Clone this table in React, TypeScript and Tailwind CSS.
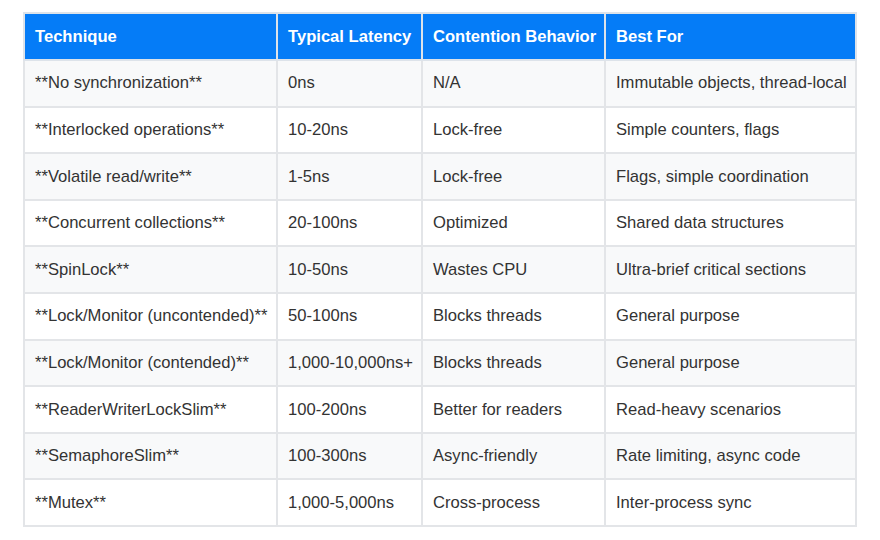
import React from "react";

const ROWS = [
  ["**No synchronization**", "0ns", "N/A", "Immutable objects, thread-local"],
  ["**Interlocked operations**", "10-20ns", "Lock-free", "Simple counters, flags"],
  ["**Volatile read/write**", "1-5ns", "Lock-free", "Flags, simple coordination"],
  ["**Concurrent collections**", "20-100ns", "Optimized", "Shared data structures"],
  ["**SpinLock**", "10-50ns", "Wastes CPU", "Ultra-brief critical sections"],
  ["**Lock/Monitor (uncontended)**", "50-100ns", "Blocks threads", "General purpose"],
  ["**Lock/Monitor (contended)**", "1,000-10,000ns+", "Blocks threads", "General purpose"],
  ["**ReaderWriterLockSlim**", "100-200ns", "Better for readers", "Read-heavy scenarios"],
  ["**SemaphoreSlim**", "100-300ns", "Async-friendly", "Rate limiting, async code"],
  ["**Mutex**", "1,000-5,000ns", "Cross-process", "Inter-process sync"],
];

const HEADERS = ["Technique", "Typical Latency", "Contention Behavior", "Best For"];
const WIDTHS = ["w-[253px]", "w-[145px]", "w-[183px]", "w-[251px]"];

export default function App() {
  return (
    <div className="w-[880px] h-[540px] bg-white pt-[12px] pl-[23px] font-['Liberation_Sans',Arial,sans-serif]">
      <table className="border-collapse w-[834px] table-fixed text-[16.6px]">
        <thead>
          <tr className="bg-[#057cf7] h-[47px]">
            {HEADERS.map((h, i) => (
              <th
                key={h}
                className={`${WIDTHS[i]} border-2 border-[#dde3ea] px-[10px] pt-[1px] whitespace-nowrap overflow-visible text-left font-bold text-white`}
              >
                {h}
              </th>
            ))}
          </tr>
        </thead>
        <tbody>
          {ROWS.map((row, r) => (
            <tr key={r} className={`h-[46.6px] ${r % 2 === 0 ? "bg-[#f8f9fa]" : "bg-white"}`}>
              {row.map((cell, c) => (
                <td key={c} className="border-2 border-[#e3e5e8] px-[10px] pt-[1px] whitespace-nowrap overflow-visible text-[#333333]">
                  {cell}
                </td>
              ))}
            </tr>
          ))}
        </tbody>
      </table>
    </div>
  );
}
